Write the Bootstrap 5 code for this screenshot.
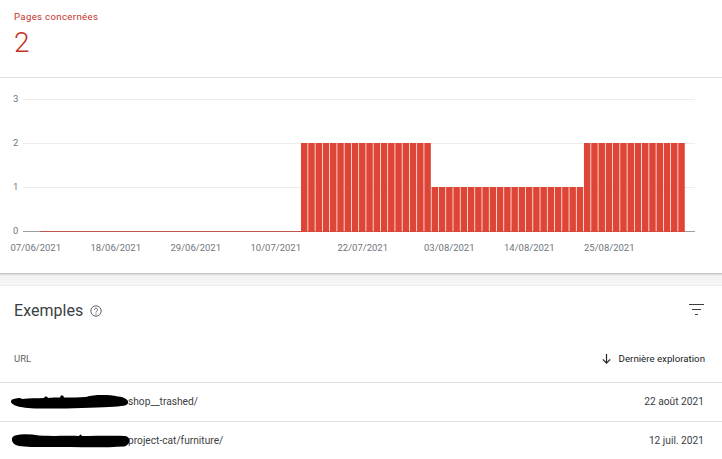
<!DOCTYPE html>
<html lang="fr"><head><meta charset="utf-8">
<title>Exemples</title>
<link href="https://cdn.jsdelivr.net/npm/bootstrap@5.3.0/dist/css/bootstrap.min.css" rel="stylesheet">
<style>
html,body{height:459px;overflow:hidden;background:#fff}
body{font-family:Roboto,"Liberation Sans",sans-serif;color:#5f6368}
.summary{height:78px;padding:10px 14px 0;border-bottom:1px solid #e0e0e0;color:#c5321f}
.summary-label{font-size:9.6px;line-height:13px;letter-spacing:.35px}
.summary-num{font-size:28px;line-height:32px;font-weight:300;margin-top:4px}
.chart{display:block;width:722px;height:195px}
.chart text{font-family:Roboto,"Liberation Sans",sans-serif;font-size:9.5px;fill:#70757a}
.band{height:13px;background:linear-gradient(#b4b4b4 0,#d8d8d8 1px,#f3f3f3 3px,#f6f6f6 100%);border-bottom:1px solid #ececec}
.ex-head{height:50px;padding:0 18px 0 14px}
.ex-head svg.flt{margin-top:-4px}
.ex-title{font-size:16px;color:#3c4043;line-height:20px;letter-spacing:.05px}
.ex-gap{gap:7px}
.col-row{height:47px;padding:0 17px 0 14px;border-bottom:1px solid #e0e0e0;font-size:9.5px}
.sort-col{color:#202124;font-size:9.7px}
.url-row{height:39px;padding:0 18px 0 14px;border-bottom:1px solid #e0e0e0;font-size:10.2px;color:#3c4043;position:relative}
.url-text{padding-left:114px}
.url-row:last-child{border-bottom:0}
.scribble{position:absolute;left:10px;top:11px}
</style></head>
<body>
<div class="summary">
  <div class="summary-label">Pages concernées</div>
  <div class="summary-num">2</div>
</div>
<svg class="chart" viewBox="0 78 722 195" xmlns="http://www.w3.org/2000/svg">
  <g stroke="#ececec" stroke-width="1">
    <line x1="23" x2="695" y1="99.5" y2="99.5"/>
    <line x1="23" x2="695" y1="143.5" y2="143.5"/>
    <line x1="23" x2="695" y1="187.5" y2="187.5"/>
  </g>
  <line x1="23" x2="695" y1="231.5" y2="231.5" stroke="#9e9e9e"/>
  <line x1="40" x2="301" y1="231.5" y2="231.5" stroke="#c2554b"/>
  <g id="bars" fill="#df4537"></g>
  <text x="13" y="102">3</text><text x="13" y="146">2</text><text x="13" y="190">1</text><text x="13" y="234">0</text>
  <text x="10.500" y="250.500">07/06/2021</text>
  <text x="90.500" y="250.500">18/06/2021</text>
  <text x="170.500" y="250.500">29/06/2021</text>
  <text x="250.500" y="250.500">10/07/2021</text>
  <text x="337.500" y="250.500">22/07/2021</text>
  <text x="424" y="250.500">03/08/2021</text>
  <text x="504" y="250.500">14/08/2021</text>
  <text x="584" y="250.500">25/08/2021</text>
</svg>
<div class="band"></div>
<div class="ex-head d-flex align-items-center justify-content-between">
  <div class="d-flex align-items-center ex-gap">
    <span class="ex-title">Exemples</span>
    <svg width="12" height="12" viewBox="0 0 12 12" fill="none"><circle cx="6" cy="6" r="5.200" stroke="#5f6368" stroke-width="1"/><path d="M4.400 4.800a1.600 1.600 0 1 1 2.500 1.300c-.6.4-.9.7-.9 1.300" stroke="#5f6368" stroke-width="1"/><circle cx="6" cy="9" r=".7" fill="#5f6368"/></svg>
  </div>
  <svg class="flt" width="15" height="11" viewBox="0 0 15 11" fill="none" stroke="#3c4043" stroke-width="1"><path d="M0 .5h15M3 5.500h9M6 10.500h3"/></svg>
</div>
<div class="col-row d-flex align-items-center justify-content-between">
  <span>URL</span>
  <span class="sort-col d-flex align-items-center gap-2">
    <svg width="9" height="10" viewBox="0 0 9 10" fill="none" stroke="#202124" stroke-width="1.200"><path d="M4.500 0v9M.8 5.400l3.700 3.700 3.700-3.700"/></svg>
    Dernière exploration
  </span>
</div>
<div class="url-row d-flex align-items-center justify-content-between">
  <span class="url-text">shop__trashed/</span><span>22 août 2021</span>
  <svg class="scribble" width="120" height="16" viewBox="0 0 120 16"><path d="M2 5.500C6 4 10 3 12 5c8-1 14-.5 22-1 1-2 3-2 4 0 6-.5 8-.5 12-.5 1-3 3-3 4 0 8 0 14 0 22-.5 8-2.500 22-2.500 32-.5 9 1 12 5 9 8-3 2-12 2-30 3-20 1-42 1-58 1C1 14-1 8 2 5.500z" fill="#000"/></svg>
</div>
<div class="url-row d-flex align-items-center justify-content-between">
  <span class="url-text">project-cat/furniture/</span><span>12 juil. 2021</span>
  <svg class="scribble" width="120" height="16" viewBox="0 0 120 16"><path d="M5 2.500c8-2 16-1 24 0 18 1 28 0 40 .5 1-2 2-2 3 0 14 0 30-.5 43 0 7 1 5 10-1 10.500-16 1-34 1-54 .5-20 0-40 .5-51-1C1 12 0 4 5 2.500z" fill="#000"/></svg>
</div>
<script>
(function(){
var g=document.getElementById('bars'),step=7.255,x0=301;
for(var i=0;i<53;i++){var y=(i>=18&&i<39)?187:143;
 var r=document.createElementNS('http://www.w3.org/2000/svg','rect');
 r.setAttribute('x',(x0+i*step).toFixed(2));r.setAttribute('y',y);r.setAttribute('width','6.5');r.setAttribute('height',232-y);g.appendChild(r);}
})();
</script>
<script src="https://cdn.jsdelivr.net/npm/bootstrap@5.3.0/dist/js/bootstrap.bundle.min.js"></script>
</body></html>
